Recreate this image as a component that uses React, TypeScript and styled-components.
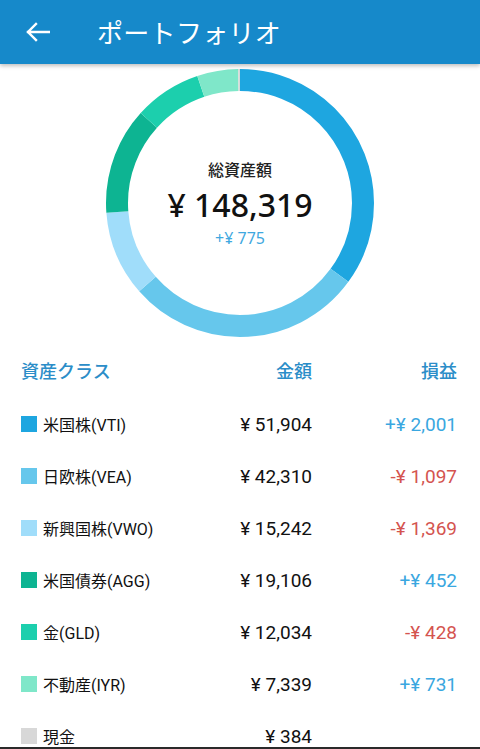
import React from 'react';
import styled, { createGlobalStyle } from 'styled-components';

const GlobalStyle = createGlobalStyle`
  html, body {
    margin: 0;
    padding: 0;
    background: #ffffff;
  }
  body {
    font-family: 'Roboto', 'Noto Sans CJK JP', sans-serif;
  }
`;

interface Asset {
  name: string;
  amount: number;
  pnl: number | null;
  color: string;
}

const assets: Asset[] = [
  { name: '米国株(VTI)', amount: 51904, pnl: 2001, color: '#1ea6e0' },
  { name: '日欧株(VEA)', amount: 42310, pnl: -1097, color: '#66c7ec' },
  { name: '新興国株(VWO)', amount: 15242, pnl: -1369, color: '#a0ddfa' },
  { name: '米国債券(AGG)', amount: 19106, pnl: 452, color: '#0db492' },
  { name: '金(GLD)', amount: 12034, pnl: -428, color: '#1ccfad' },
  { name: '不動産(IYR)', amount: 7339, pnl: 731, color: '#7fe7c9' },
  { name: '現金', amount: 384, pnl: null, color: '#d8d8d8' },
];

const dayDiff = 775;

const yen = (n: number) => '¥ ' + Math.abs(n).toLocaleString('en-US');

const Page = styled.div`
  height: 100vh;
  display: flex;
  flex-direction: column;
  overflow: hidden;
`;

const AppBar = styled.header`
  flex: 0 0 64px;
  display: flex;
  align-items: center;
  background: #1689ca;
  box-shadow: 0 2px 4px rgba(0, 0, 0, 0.25);
  position: relative;
  z-index: 1;
`;

const BackButton = styled.div`
  width: 97px;
  display: flex;
  align-items: center;
  padding-left: 26px;
  box-sizing: border-box;
`;

const Title = styled.h1`
  margin: 0;
  color: #ffffff;
  font-family: 'Noto Sans CJK JP', sans-serif;
  font-weight: 400;
  font-size: 26px;
  letter-spacing: 0.3px;
  line-height: 1;
`;

const ChartArea = styled.section`
  display: flex;
  justify-content: center;
  padding-top: 5px;
`;

const Donut = styled.div`
  display: grid;
  width: 268px;
  height: 268px;

  & > * {
    grid-area: 1 / 1;
  }
`;

const Center = styled.div`
  display: flex;
  flex-direction: column;
  align-items: center;
  justify-content: center;
  font-family: 'Noto Sans', 'Noto Sans CJK JP', sans-serif;
`;

const TotalLabel = styled.div`
  font-family: 'Noto Sans CJK JP', sans-serif;
  font-size: 16px;
  font-weight: 500;
  color: #222;
  line-height: 20px;
`;

const TotalValue = styled.div`
  font-size: 32px;
  font-weight: 500;
  color: #111;
  line-height: 44px;
  margin-top: 4px;
`;

const TotalDiff = styled.div`
  font-size: 16px;
  color: #3fa8e0;
  line-height: 18px;
  margin-top: 2px;
`;

const Table = styled.div`
  flex: 1;
  overflow: hidden;
  padding: 0 23px 0 21px;
`;

const Row = styled.div<{ $head?: boolean }>`
  display: grid;
  grid-template-columns: 1fr 122px 145px;
  align-items: center;
  height: ${(p) => (p.$head ? 48 : 52)}px;
  margin-top: ${(p) => (p.$head ? 9 : 0)}px;
  margin-bottom: ${(p) => (p.$head ? 4 : 0)}px;
`;

const HeadCell = styled.div<{ $right?: boolean }>`
  font-family: 'Noto Sans CJK JP', sans-serif;
  font-size: 18px;
  font-weight: 500;
  color: #2b8dc8;
  text-align: ${(p) => (p.$right ? 'right' : 'left')};
`;

const NameCell = styled.div`
  display: flex;
  align-items: center;
  gap: 6px;
  font-size: 16px;
  color: #111;
`;

const Swatch = styled.span<{ $color: string }>`
  width: 16px;
  height: 16px;
  background: ${(p) => p.$color};
  flex: 0 0 16px;
`;

const Amount = styled.div`
  font-size: 19px;
  color: #111;
  text-align: right;
`;

const Pnl = styled.div<{ $loss?: boolean }>`
  font-size: 19px;
  color: ${(p) => (p.$loss ? '#d4544f' : '#3aa7e0')};
  text-align: right;
`;

const BottomEdge = styled.div`
  flex: 0 0 2px;
  background: #2a2a2a;
`;

const BackArrow = () => (
  <svg width="24" height="20" viewBox="0 0 24 20">
    <path
      d="M2 10 H23 M10 2 L2 10 L10 18"
      stroke="#ffffff"
      strokeWidth="2.4"
      fill="none"
      strokeLinecap="square"
      strokeLinejoin="miter"
    />
  </svg>
);

const DonutChart = () => {
  const r = 123;
  const c = 2 * Math.PI * r;
  const total = assets.reduce((s, a) => s + a.amount, 0);
  let offset = 0;
  return (
    <svg width="268" height="268" viewBox="0 0 268 268">
      <g transform="rotate(-90 134 134)">
        {assets.map((a) => {
          const len = (a.amount / total) * c;
          const seg = (
            <circle
              key={a.name}
              cx="134"
              cy="134"
              r={r}
              fill="none"
              stroke={a.color}
              strokeWidth="22"
              strokeDasharray={`${len} ${c - len}`}
              strokeDashoffset={-offset}
            />
          );
          offset += len;
          return seg;
        })}
      </g>
    </svg>
  );
};

const App = () => {
  const total = assets.reduce((s, a) => s + a.amount, 0);
  return (
    <Page>
      <GlobalStyle />
      <AppBar>
        <BackButton>
          <BackArrow />
        </BackButton>
        <Title>ポートフォリオ</Title>
      </AppBar>
      <ChartArea>
        <Donut>
          <DonutChart />
          <Center>
            <TotalLabel>総資産額</TotalLabel>
            <TotalValue>{yen(total)}</TotalValue>
            <TotalDiff>{(dayDiff >= 0 ? '+' : '-') + yen(dayDiff)}</TotalDiff>
          </Center>
        </Donut>
      </ChartArea>
      <Table>
        <Row $head>
          <HeadCell>資産クラス</HeadCell>
          <HeadCell $right>金額</HeadCell>
          <HeadCell $right>損益</HeadCell>
        </Row>
        {assets.map((a) => (
          <Row key={a.name}>
            <NameCell>
              <Swatch $color={a.color} />
              {a.name}
            </NameCell>
            <Amount>{yen(a.amount)}</Amount>
            <Pnl $loss={a.pnl !== null && a.pnl < 0}>
              {a.pnl === null ? '' : (a.pnl < 0 ? '-' : '+') + yen(a.pnl)}
            </Pnl>
          </Row>
        ))}
      </Table>
      <BottomEdge />
    </Page>
  );
};

export default App;
